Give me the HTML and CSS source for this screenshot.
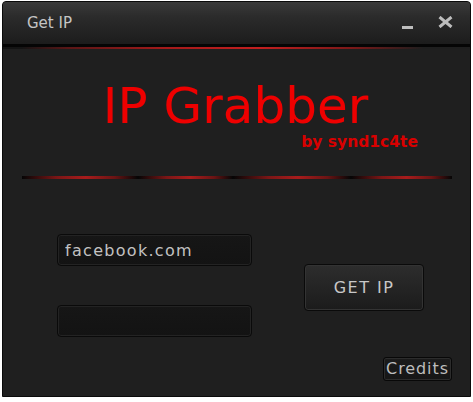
FILE: index.html
```html
<!DOCTYPE html>
<html>
<head>
<meta charset="utf-8">
<title>Get IP</title>
<link rel="stylesheet" href="styles.css">
</head>
<body>
<div class="window">
  <div class="titlebar">
    <span class="title-text">Get IP</span>
    <div class="controls">
      <span class="min"></span>
      <svg class="close" width="15" height="12" viewBox="0 0 15 12"><path d="M1.5 1 L13.5 11 M13.5 1 L1.5 11" stroke="#bdbdbd" stroke-width="3" fill="none"/></svg>
    </div>
  </div>
  <div class="title-line"></div>
  <div class="title-glow"></div>
  <div class="content">
    <div class="logo">IP Grabber</div>
    <div class="byline">by synd1c4te</div>
    <div class="separator">
      <span class="seg"></span><span class="seg"></span><span class="seg"></span><span class="seg"></span>
    </div>
    <div class="form-row">
      <div class="inputs">
        <input class="field" type="text" value="facebook.com">
        <input class="field" type="text" value="">
      </div>
      <button class="get-btn">GET IP</button>
    </div>
    <div class="footer">
      <button class="credits">Credits</button>
    </div>
  </div>
</div>
</body>
</html>
```
FILE: styles.css
```css
html, body {
  margin: 0;
  padding: 0;
  background: #ffffff;
}
body {
  font-family: "DejaVu Sans", Verdana, sans-serif;
  padding: 1px 0 0 2px;
}
.window {
  width: 467px;
  height: 394px;
  border: 1px solid #0a0a0a;
  border-radius: 4px 4px 0 0;
  background: #1f1f1f;
  display: flex;
  flex-direction: column;
  overflow: hidden;
}
.titlebar {
  height: 42px;
  flex: none;
  display: flex;
  align-items: center;
  justify-content: space-between;
  background: linear-gradient(#3a3a3a, #2b2b2b 35%, #222222 75%, #1c1c1c);
  padding: 0 17px 0 24px;
}
.title-text {
  font-size: 15px;
  line-height: 15px;
  color: #c4c4c4;
  padding-top: 1px;
}
.controls {
  display: flex;
  align-items: center;
  gap: 25px;
}
.min {
  display: block;
  width: 11px;
  height: 3px;
  background: #bdbdbd;
  margin-top: 8px;
}
.close {
  display: block;
  margin-top: -3px;
}
.title-line {
  height: 3px;
  flex: none;
  background: #050505;
}
.title-glow {
  height: 2px;
  flex: none;
  background: linear-gradient(to right, rgba(20,20,20,1) 4%, #5a1616 14%, #a51a1a 35%, #c21f1f 55%, #7a1818 75%, rgba(30,30,30,1) 90%);
}
.content {
  flex: 1;
  display: flex;
  flex-direction: column;
}
.logo {
  margin-top: 35px;
  height: 44px;
  font-size: 50px;
  line-height: 44px;
  color: #ee0000;
  text-align: center;
  padding-right: 2px;
}
.byline {
  margin-top: 7px;
  height: 15px;
  font-size: 15.5px;
  line-height: 15px;
  font-weight: bold;
  color: #d80000;
  text-align: right;
  padding-right: 52px;
}
.separator {
  margin: 26px 18px 0 19px;
  height: 3px;
  display: flex;
}
.seg {
  flex: 1;
  background: linear-gradient(to right, #050505, #7a1616 30%, #a81c1c 55%, #6a1414 80%, #050505);
}
.seg:nth-child(1) { flex: 116; }
.seg:nth-child(2) { flex: 95; }
.seg:nth-child(3) { flex: 119; }
.seg:nth-child(4) { flex: 101; }
.form-row {
  margin-top: 55px;
  display: flex;
  align-items: flex-start;
  padding-left: 54px;
}
.inputs {
  display: flex;
  flex-direction: column;
  gap: 39px;
}
.field {
  box-sizing: border-box;
  width: 195px;
  height: 32px;
  margin: 0;
  padding: 0 0 0 7px;
  border: 1px solid #0a0a0a;
  border-radius: 4px;
  background: linear-gradient(#161616, #131313);
  box-shadow: inset 0 0 0 1px #232323;
  font-family: "DejaVu Sans", Verdana, sans-serif;
  font-size: 16px;
  letter-spacing: 1.3px;
  color: #c2c2c2;
  outline: none;
}
.get-btn {
  box-sizing: border-box;
  margin: 30px 0 0 52px;
  width: 120px;
  height: 47px;
  padding: 0;
  border: 1px solid #0a0a0a;
  border-radius: 4px;
  background: linear-gradient(#2d2d2d, #262626 40%, #1f1f1f 80%, #1b1b1b);
  box-shadow: inset 0 0 0 1px #333333;
  font-family: "DejaVu Sans", Verdana, sans-serif;
  font-size: 16px;
  letter-spacing: 1.5px;
  color: #c8c8c8;
  cursor: pointer;
}
.footer {
  margin-top: 20px;
  display: flex;
  justify-content: flex-end;
  padding-right: 18px;
}
.credits {
  box-sizing: border-box;
  width: 69px;
  height: 24px;
  margin: 0;
  padding: 0;
  border: 1px solid #080808;
  border-radius: 3px;
  background: linear-gradient(#1b1b1b, #161616);
  box-shadow: inset 0 0 0 1px #2c2c2c;
  font-family: "DejaVu Sans", Verdana, sans-serif;
  font-size: 16px;
  line-height: 20px;
  letter-spacing: 0.9px;
  color: #bdbdbd;
  cursor: pointer;
}
```
